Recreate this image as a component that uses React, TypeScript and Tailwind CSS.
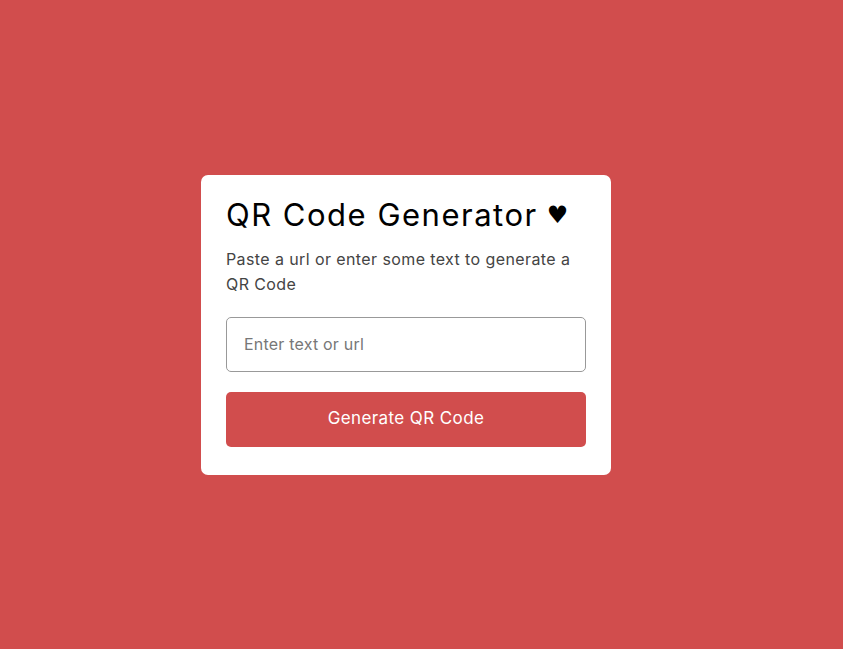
export default function App() {
  return (
    <div className="flex min-h-[649px] w-full items-center justify-center bg-[#d14d4d] pr-[31px] font-['Inter','Open_Sans',sans-serif]">
      <div className="w-[410px] rounded-[7px] bg-white px-[25px] pt-[22px] pb-[28px]">
        <h1 className="flex items-center text-[31px] font-normal leading-[36px] tracking-[1.5px] text-black">
          QR Code Generator
          <span className="ml-[9px] font-['DejaVu_Sans',sans-serif] text-[24px] leading-none">♥</span>
        </h1>
        <p className="mt-[14px] text-[16px] leading-[25px] tracking-[0.4px] text-[#444]">
          Paste a url or enter some text to generate a QR Code
        </p>
        <input
          type="text"
          placeholder="Enter text or url"
          className="mt-[20px] h-[55px] w-full rounded-[5px] border border-[#999] px-[17px] text-[16px] tracking-[0.2px] text-[#333] outline-none placeholder:text-[#777]"
        />
        <button className="mt-[20px] h-[55px] w-full rounded-[5px] bg-[#d14d4d] text-[17px] tracking-[0.4px] text-white">
          Generate QR Code
        </button>
      </div>
    </div>
  );
}
